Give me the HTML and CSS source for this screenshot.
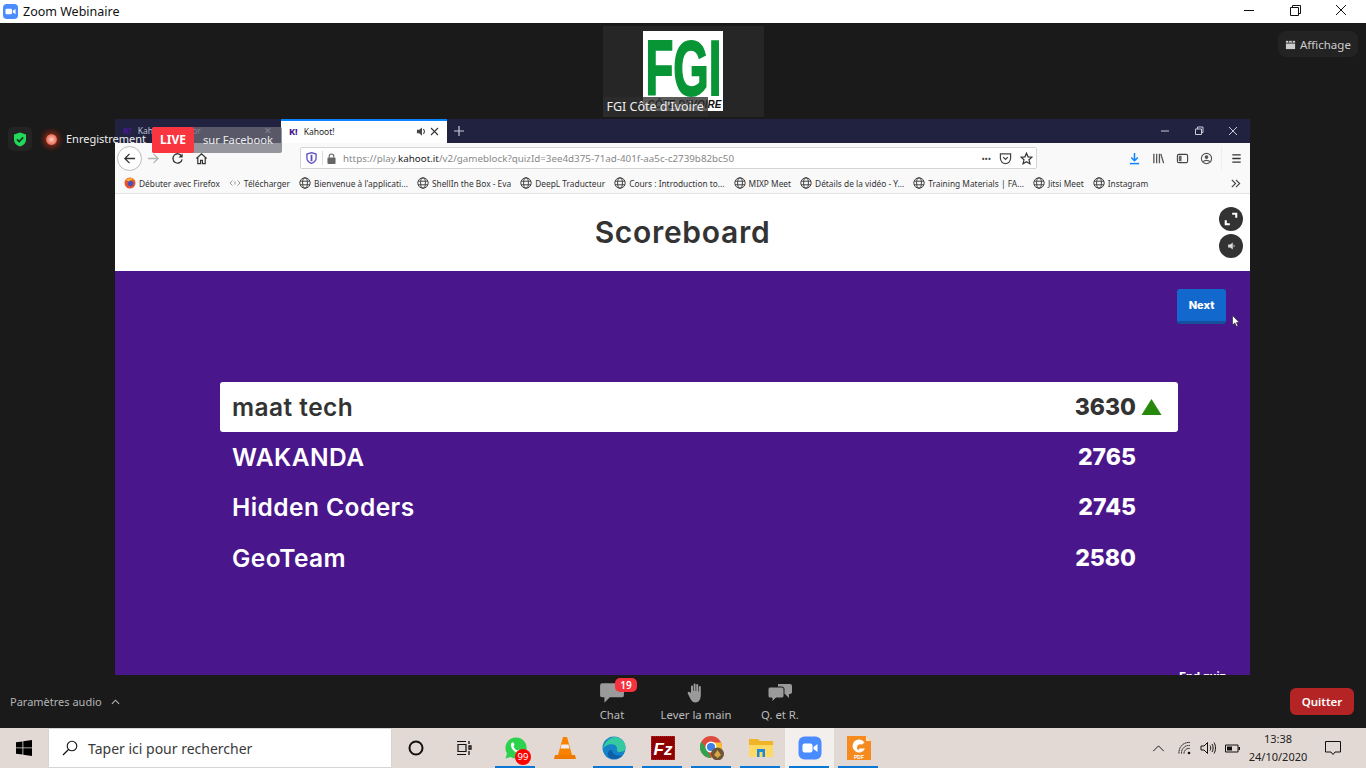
FILE: index.html
```html
<!DOCTYPE html>
<html lang="fr">
<head>
<meta charset="utf-8">
<title>Zoom Webinaire</title>
<link rel="stylesheet" href="styles.css">
</head>
<body>
<div class="app">
  <header class="titlebar">
    <svg class="zoom-logo" viewBox="0 0 16 16"><rect width="16" height="16" rx="4" fill="#4a8cff"/><rect x="2.6" y="5" width="7" height="6" rx="1.4" fill="#fff"/><path d="M10.4 7.2 13.4 5.2V10.8L10.4 8.8Z" fill="#fff"/></svg>
    <span class="title-text">Zoom Webinaire</span>
    <div class="win-controls">
      <svg viewBox="0 0 46 23"><path d="M18 10.5H28" stroke="#111" fill="none"/></svg>
      <svg viewBox="0 0 46 23"><path d="M18.5 7.5H26.5V15.5H18.5ZM20.5 7.5V5.5H28.5V13.5H26.5" stroke="#111" fill="none"/></svg>
      <svg viewBox="0 0 46 23"><path d="M18 5 28 15M28 5 18 15" stroke="#111" fill="none"/></svg>
    </div>
  </header>

  <main class="meeting">
    <section class="top-strip">
      <div class="thumb">
        <div class="fgi">
          <svg class="fgi-mark" viewBox="0 0 80 80"><text class="fgi-letters" x="2.5" y="63.5" textLength="76" lengthAdjust="spacingAndGlyphs">FGI</text><text class="fgi-sub" x="78.5" y="77" text-anchor="end">CÔTE D'IVOIRE</text></svg>
        </div>
        <span class="thumb-label">FGI Côte d'Ivoire</span>
      </div>
      <div class="view-btn">
        <svg viewBox="0 0 12 12"><path d="M1 2H11V11H1Z" fill="#ccc"/><path d="M1 4.5H11" stroke="#2a2a2a"/><path d="M4 1V4M8 1V4" stroke="#2a2a2a"/></svg>
        <span>Affichage</span>
      </div>
    </section>

    <div class="status">
      <span class="shield"><svg viewBox="0 0 14 15"><path d="M7 .5 13 2.6V7.5C13 11 10.4 13.4 7 14.6 3.6 13.4 1 11 1 7.5V2.6Z" fill="#23d959"/><path d="M3.9 7.4 6.2 9.6 10.2 5.4" stroke="#0d3b1c" stroke-width="1.7" fill="none"/></svg></span>
      <span class="rec-dot"></span>
      <span class="rec-text">Enregistrement</span>
    </div>

    <div class="live">
      <span class="live-tag">LIVE</span>
      <span class="live-text">sur Facebook</span>
    </div>

    <section class="browser">
      <div class="tabs">
        <div class="tab tab-off">
          <span class="kbadge">K!</span><span class="tab-name">Kahoot! Creator</span><span class="tab-x">✕</span>
        </div>
        <div class="tab tab-on">
          <span class="kbadge">K!</span><span class="tab-name">Kahoot!</span>
          <svg class="tab-sound" viewBox="0 0 12 12"><path d="M1 4H3.5L6.5 1.5V10.5L3.5 8H1Z" fill="#444"/><path d="M8 3.5C9.6 5 9.6 7 8 8.5" stroke="#444" stroke-width="1.2" fill="none"/></svg>
          <svg class="tab-close" viewBox="0 0 9 9"><path d="M1 1 8 8M8 1 1 8" stroke="#333" stroke-width="1.1"/></svg>
        </div>
        <svg class="tab-plus" viewBox="0 0 12 12"><path d="M6 1V11M1 6H11" stroke="#c8c9d4" stroke-width="1.2"/></svg>
        <div class="ff-controls">
          <svg viewBox="0 0 34 24"><path d="M13 12H21" stroke="#c8c9d4"/></svg>
          <svg viewBox="0 0 34 24"><path d="M13.5 10H19.5V15.5H13.5ZM15.5 10V8H21V13.5H19.5" stroke="#c8c9d4" fill="none"/></svg>
          <svg viewBox="0 0 34 24"><path d="M13 8 21 16M21 8 13 16" stroke="#c8c9d4"/></svg>
        </div>
      </div>

      <div class="toolbar">
        <span class="back"><svg viewBox="0 0 14 14"><path d="M13 7H2M7 2 2 7 7 12" stroke="#333" stroke-width="1.4" fill="none"/></svg></span>
        <svg class="tool-ico" viewBox="0 0 14 14"><path d="M1 7H12M7 2 12 7 7 12" stroke="#b4b4b4" stroke-width="1.4" fill="none"/></svg>
        <svg class="tool-ico" viewBox="0 0 14 14"><path d="M11.5 4.5A5 5 0 1 0 12 8" stroke="#333" stroke-width="1.4" fill="none"/><path d="M12.5 1.5V6H8Z" fill="#333"/></svg>
        <svg class="tool-ico" viewBox="0 0 14 14"><path d="M1.5 7 7 2 12.5 7M3 6V12.5H6V9H8V12.5H11V6" stroke="#333" stroke-width="1.3" fill="none"/></svg>
        <div class="urlbar">
          <svg class="url-shield" viewBox="0 0 12 13"><path d="M6 .7 11 2.2V6.5C11 9.5 9 11.3 6 12.4 3 11.3 1 9.5 1 6.5V2.2Z" fill="none" stroke="#5b4fc0" stroke-width="1.4"/><path d="M6 3V10" stroke="#5b4fc0" stroke-width="2"/></svg>
          <span class="url-sep"></span>
          <svg class="url-lock" viewBox="0 0 10 12"><rect x="0.5" y="5" width="9" height="7" rx="1" fill="#666"/><path d="M2.5 5V3.5A2.5 2.5 0 0 1 7.5 3.5V5" stroke="#666" stroke-width="1.3" fill="none"/></svg>
          <span class="url">https://play.<b>kahoot.it</b>/v2/gameblock?quizId=3ee4d375-71ad-401f-aa5c-c2739b82bc50</span>
          <span class="dots">•••</span>
          <svg class="url-ico" viewBox="0 0 14 14"><path d="M1.5 2H12.5V6.5C12.5 10 10 12.5 7 12.5S1.5 10 1.5 6.5Z" fill="none" stroke="#444" stroke-width="1.3"/><path d="M4.5 5.5 7 8 9.5 5.5" stroke="#444" stroke-width="1.4" fill="none"/></svg>
          <svg class="url-ico" viewBox="0 0 14 14"><path d="M7 1.3 8.7 5.2 12.9 5.6 9.7 8.4 10.7 12.6 7 10.4 3.3 12.6 4.3 8.4 1.1 5.6 5.3 5.2Z" fill="none" stroke="#333" stroke-width="1.3"/></svg>
        </div>
        <div class="tool-right">
          <svg viewBox="0 0 14 14"><path d="M7 1V9.5M3.5 6 7 9.5 10.5 6" stroke="#0a84ff" stroke-width="1.6" fill="none"/><path d="M2 12.5H12" stroke="#0a84ff" stroke-width="1.6"/></svg>
          <svg viewBox="0 0 14 14"><path d="M2 2V12M5 2V12M8 2V12M9.5 2 12.5 12" stroke="#555" stroke-width="1.4" fill="none"/></svg>
          <svg viewBox="0 0 14 14"><rect x="1.5" y="2.5" width="11" height="9" rx="1.5" fill="none" stroke="#444" stroke-width="1.2"/><path d="M3 4H6V10H3Z" fill="#666"/></svg>
          <svg viewBox="0 0 14 14"><circle cx="7" cy="7" r="5.5" fill="none" stroke="#555" stroke-width="1.2"/><circle cx="7" cy="5.5" r="2" fill="#555"/><path d="M3.5 10.5C4.5 8.5 9.5 8.5 10.5 10.5" stroke="#555" stroke-width="1.5" fill="none"/></svg>
          <span class="tool-sep"></span>
          <svg viewBox="0 0 14 14"><path d="M2.5 3H11.5M2.5 7H11.5M2.5 11H11.5" stroke="#333" stroke-width="1.4"/></svg>
        </div>
      </div>

      <div class="bookmarks">
        <span class="bm"><svg viewBox="0 0 12 12"><circle cx="6" cy="6" r="5.5" fill="#e8552c"/><circle cx="6.5" cy="6.5" r="2.8" fill="#4a4fb5"/><path d="M2 3C4 1 8 .5 10.5 3 8 2.5 6 3 5 4.5Z" fill="#ffb62e"/></svg>Débuter avec Firefox</span>
        <span class="bm"><svg viewBox="0 0 12 12"><path d="M3.5 3.5 1 6 3.5 8.5M8.5 3.5 11 6 8.5 8.5" stroke="#999" fill="none"/><path d="M6 4.5V7.5" stroke="#999"/></svg>Télécharger</span>
        <span class="bm"><svg viewBox="0 0 12 12"><use href="#globe"/></svg>Bienvenue à l'applicati...</span>
        <span class="bm"><svg viewBox="0 0 12 12"><use href="#globe"/></svg>ShellIn the Box - Eva</span>
        <span class="bm"><svg viewBox="0 0 12 12"><use href="#globe"/></svg>DeepL Traducteur</span>
        <span class="bm"><svg viewBox="0 0 12 12"><use href="#globe"/></svg>Cours : Introduction to...</span>
        <span class="bm"><svg viewBox="0 0 12 12"><use href="#globe"/></svg>MIXP Meet</span>
        <span class="bm"><svg viewBox="0 0 12 12"><use href="#globe"/></svg>Détails de la vidéo - Y...</span>
        <span class="bm"><svg viewBox="0 0 12 12"><use href="#globe"/></svg>Training Materials | FA...</span>
        <span class="bm"><svg viewBox="0 0 12 12"><use href="#globe"/></svg>Jitsi Meet</span>
        <span class="bm"><svg viewBox="0 0 12 12"><use href="#globe"/></svg>Instagram</span>
        <svg class="bm-more" viewBox="0 0 12 12"><path d="M2 2 6 6 2 10M6.5 2 10.5 6 6.5 10" stroke="#444" stroke-width="1.3" fill="none"/></svg>
      </div>

      <div class="kahoot-head">
        <h1>Scoreboard</h1>
        <div class="round-btns">
          <span class="round"><svg viewBox="0 0 12 12"><path d="M7 1.5H10.5V5M5 10.5H1.5V7" stroke="#fff" stroke-width="1.8" fill="none"/></svg></span>
          <span class="round"><svg viewBox="0 0 12 12"><path d="M3.500 4.800H5.300L7.500 3V9L5.300 7.200H3.500Z" fill="#ddd"/><path d="M8.300 5C8.800 5.600 8.800 6.400 8.300 7" stroke="#ddd" stroke-width=".8" fill="none"/></svg></span>
        </div>
      </div>

      <div class="kahoot-body">
        <div class="next-row"><button class="next">Next</button>
          <svg class="cursor" viewBox="0 0 8 12"><path d="M.5.5V10L2.8 8 4.5 11.5 6 10.8 4.3 7.5H7.3Z" fill="#fff" stroke="#222" stroke-width=".6"/></svg>
        </div>
        <ol class="scores">
          <li class="score top"><span>maat tech</span><b>3630</b><svg class="arrow" viewBox="0 0 20 16"><path d="M10 0 20 16H0Z" fill="#26890c"/></svg></li>
          <li class="score"><span>WAKANDA</span><b>2765</b></li>
          <li class="score"><span>Hidden Coders</span><b>2745</b></li>
          <li class="score"><span>GeoTeam</span><b>2580</b></li>
        </ol>
        <div class="endquiz">End quiz</div>
      </div>
    </section>

    <footer class="controls">
      <div class="audio"><span>Paramètres audio</span><svg viewBox="0 0 10 6"><path d="M1 5 5 1 9 5" stroke="#bbb" stroke-width="1.2" fill="none"/></svg></div>
      <div class="actions">
        <div class="action chat">
          <svg viewBox="0 0 24 20"><path d="M3 1H21A2 2 0 0 1 23 3V12A2 2 0 0 1 21 14H10L5 19V14H3A2 2 0 0 1 1 12V3A2 2 0 0 1 3 1Z" fill="#9a9a9a"/></svg>
          <span class="badge">19</span>
          <span>Chat</span>
        </div>
        <div class="action">
          <svg viewBox="0 0 20 22"><path d="M5 11V4.5C5 3 7 3 7 4.5V9H7.6V2.5C7.6 1 9.6 1 9.6 2.5V9H10.2V3C10.2 1.5 12.2 1.5 12.2 3V9.5H12.8V5C12.8 3.500 14.8 3.500 14.8 5V13C14.8 17 13 20.5 9.5 20.5 7 20.5 5.5 19 4 16L1.8 11.5C1.2 10 3 9 4 10.3Z" fill="#9a9a9a"/></svg>
          <span>Lever la main</span>
        </div>
        <div class="action">
          <svg viewBox="0 0 26 20"><path d="M11 1H23A2 2 0 0 1 25 3V9A2 2 0 0 1 23 11H22V15L18 11H11Z" fill="#9a9a9a"/><path d="M3 4H15A2 2 0 0 1 17 6V13A2 2 0 0 1 15 15H9L5 19V15H3A2 2 0 0 1 1 13V6A2 2 0 0 1 3 4Z" fill="#9a9a9a" stroke="#1a1a1a"/></svg>
          <span>Q. et R.</span>
        </div>
      </div>
      <button class="quit">Quitter</button>
    </footer>
  </main>

  <nav class="taskbar">
    <span class="start"><svg viewBox="0 0 16 16"><path d="M0 2.3 6.5 1.4V7.5H0ZM7.3 1.3 16 0V7.5H7.3ZM0 8.3H6.5V14.6L0 13.7ZM7.3 8.3H16V16L7.3 14.7Z" fill="#000"/></svg></span>
    <div class="search">
      <svg viewBox="0 0 16 16"><circle cx="10" cy="6" r="4.8" fill="none" stroke="#111" stroke-width="1.1"/><path d="M6.5 9.5 1 15" stroke="#111" stroke-width="1.3"/></svg>
      <span>Taper ici pour rechercher</span>
    </div>
    <span class="sys"><svg viewBox="0 0 16 16"><circle cx="8" cy="8" r="6.5" fill="none" stroke="#111" stroke-width="2"/></svg></span>
    <span class="sys"><svg viewBox="0 0 16 16"><path d="M1 1.5H10M1 14.5H10M2 4.5H10V11.5H2Z" fill="none" stroke="#111" stroke-width="1.2"/><path d="M13 1V4M13 6H15V9H13ZM13 11V15" stroke="#111" stroke-width="1.3" fill="none"/></svg></span>
    <div class="apps">
      <span class="app-ico running"><svg viewBox="0 0 24 24"><path d="M12 1.5A10.5 10.5 0 0 0 3 17.5L1.5 22.5 6.7 21A10.5 10.5 0 1 0 12 1.5Z" fill="#2bd24c"/><path d="M8 6.5C6 8 7 12 9.5 14.5S15.5 18 17 16L15 13.5 13.5 14.5C12 14 10 12 9.5 10.5L10.5 9 9.5 6.5Z" fill="#fff"/></svg><em class="wa-badge">99</em></span>
      <span class="app-ico"><svg viewBox="0 0 24 24"><path d="M10 1H14L19 19H5Z" fill="#f78200"/><path d="M8.5 8.5H15.5L16.5 12.5H7.5Z" fill="#eee"/><path d="M2 19H22L23 23H1Z" fill="#f07a00"/></svg></span>
      <span class="app-ico running"><svg viewBox="0 0 24 24"><circle cx="12" cy="12" r="11.5" fill="#1583c9"/><path d="M1 13C2 6 8 1 13 1 19 1 23.5 6 23.5 12 23.5 15 20 16 17 16 13 16 17 12 13 9 9 7 3 9 1 13Z" fill="#35c9a0"/><path d="M10 14C10 18 14 20 20 19.5 17 23 12 24 8 22 4 19 6 13 10 14Z" fill="#0f5fa8"/></svg></span>
      <span class="app-ico running"><svg viewBox="0 0 24 24"><rect width="24" height="24" fill="#8e0000" stroke="#c55" stroke-dasharray="1 1"/><text class="fz" x="12" y="19">Fz</text></svg></span>
      <span class="app-ico running"><svg viewBox="0 0 24 24"><circle cx="11" cy="11" r="11" fill="#dd4b3e"/><path d="M11 22A11 11 0 0 1 1.5 5.5L7 14Z" fill="#2ea44f"/><path d="M11 22A11 11 0 0 0 21 6.5H11L15 14Z" fill="#fbc02d"/><circle cx="11" cy="11" r="4.8" fill="#3f7fe8" stroke="#fff" stroke-width="1.5"/><circle cx="17.5" cy="18" r="6.5" fill="#6d5537"/><path d="M14 19 17.5 14 21 19 17.5 22Z" fill="#d9a441"/></svg></span>
      <span class="app-ico running"><svg viewBox="0 0 24 24"><path d="M0 3H9L11 5H24V21H0Z" fill="#f0b429"/><path d="M0 9H24V21H0Z" fill="#ffd966"/><path d="M8 13H16V21H13.5V16H10.5V21H8Z" fill="#1c8ad6"/></svg></span>
      <span class="app-ico running active"><svg viewBox="0 0 24 24"><rect width="23" height="23" x=".5" y=".5" rx="6" fill="#4a8cff"/><rect x="4.5" y="7.5" width="10" height="9" rx="2" fill="#fff"/><path d="M15.5 11 19.5 8V16L15.5 13Z" fill="#fff"/></svg></span>
      <span class="app-ico running"><svg viewBox="0 0 24 24"><path d="M0 0H19L24 5V24H0Z" fill="#f58a1f"/><path d="M19 0 24 5H19Z" fill="#fde1c4"/><path d="M17.5 6.5A6.5 6.5 0 1 0 18 12.5H12.5L11 15H14.5A3.5 3.5 0 1 1 15 8.5Z" fill="#fff"/><text class="pdf" x="12" y="22.5">PDF</text></svg></span>
    </div>
    <div class="tray">
      <svg class="chev" viewBox="0 0 14 8"><path d="M1 7 7 1 13 7" stroke="#111" stroke-width="1.1" fill="none"/></svg>
      <svg class="net" viewBox="0 0 14 14"><path d="M1 12.5A10 10 0 0 1 12 1.5M3.5 12.5A7.5 7.5 0 0 1 12 4.5M6 12.5A5 5 0 0 1 12 7.5" stroke="#111" fill="none" stroke-dasharray="1.5 .5"/><circle cx="11" cy="12" r="1.3" fill="#111"/></svg>
      <svg class="vol" viewBox="0 0 16 14"><path d="M1 5H4L7.5 1.5V12.5L4 9H1Z" fill="none" stroke="#111"/><path d="M10 4.5C11 6 11 8 10 9.5M12 3C13.5 5 13.5 9 12 11M14 1.5C16 4.5 16 9.5 14 12.5" stroke="#111" fill="none"/></svg>
      <svg class="bat" viewBox="0 0 15 9"><path d="M.5 1H13V8H.5Z" fill="none" stroke="#111"/><path d="M2 2.5H7V6.5H2Z" fill="#111"/><path d="M13.5 3H15V6H13.5Z" fill="#111"/></svg>
      <div class="clock"><span>13:38</span><span>24/10/2020</span></div>
      <svg class="notif" viewBox="0 0 16 16"><path d="M.5 1.5H15.5V12H10L8 14.5 6 12H.5Z" fill="none" stroke="#111"/></svg>
    </div>
  </nav>
</div>
<svg class="defs" aria-hidden="true"><defs><g id="globe" fill="none" stroke="#444"><circle cx="6" cy="6" r="5.2"/><ellipse cx="6" cy="6" rx="2.4" ry="5.2"/><path d="M1 4.2H11M1 7.8H11"/></g></defs></svg>
</body>
</html>
```

FILE: styles.css
```css
* { box-sizing: border-box; }
html, body { margin: 0; padding: 0; }
body { width: 1366px; height: 768px; overflow: hidden; font-family: "Noto Sans", "Open Sans", sans-serif; }
.defs { display: block; width: 0; height: 0; }
.app { width: 1366px; height: 768px; display: flex; flex-direction: column; }

.titlebar { height: 23px; background: #fff; display: flex; align-items: center; padding-left: 3px; flex: none; }
.zoom-logo { width: 15px; height: 15px; }
.title-text { margin-left: 5px; font-size: 12.5px; color: #111; }
.win-controls { margin-left: auto; margin-right: 2px; display: flex; }
.win-controls svg { width: 46px; height: 23px; display: block; }

.meeting { position: relative; flex: 1; background: #1a1a1a; display: flex; flex-direction: column; min-height: 0; }
.top-strip { height: 96px; flex: none; display: flex; justify-content: center; position: relative; padding-top: 3px; }
.thumb { position: relative; width: 161px; height: 91px; background: #262626; display: flex; justify-content: center; padding-top: 5px; }
.fgi { width: 80px; height: 80px; background: #fff; }
.fgi-mark { width: 80px; height: 80px; display: block; }
.fgi-letters { font-family: "Liberation Sans", sans-serif; font-weight: 700; font-size: 78px; fill: #079536; stroke: #079536; stroke-width: 2px; }
.fgi-sub { font-family: "Liberation Sans", sans-serif; font-weight: 700; font-style: italic; font-size: 10px; fill: #111; }
.thumb-label { position: absolute; left: 0; bottom: 0; padding: 0 4px; height: 20px; line-height: 20px; background: rgba(45,45,45,.78); color: #eee; font-size: 12.5px; white-space: nowrap; }
.view-btn { position: absolute; right: 8px; top: 8px; width: 80px; height: 26px; border-radius: 8px; background: #232323; display: flex; align-items: center; gap: 4px; padding-left: 7px; color: #ccc; font-size: 11.5px; }
.view-btn svg { width: 11px; height: 11px; }

.status { position: absolute; left: 8px; top: 104px; height: 24px; display: flex; align-items: center; color: #eee; font-size: 11px; z-index: 2; }
.shield { width: 24px; height: 24px; border-radius: 5px; background: #232323; display: flex; align-items: center; justify-content: center; }
.shield svg { width: 14px; height: 15px; }
.rec-dot { width: 11px; height: 11px; border-radius: 50%; margin-left: 14px; background: radial-gradient(circle, #ffd0c4 0, #e8604a 75%); box-shadow: 0 0 5px 3px #7e2616; }
.rec-text { margin: 0 0 2px 9px; white-space: nowrap; }
.live { position: absolute; left: 152px; top: 104px; width: 130px; height: 26px; display: flex; align-items: center; background: rgba(110,110,120,.72); color: #eee; font-size: 11.2px; z-index: 3; border-radius: 2px; }
.live-tag { width: 42px; height: 26px; line-height: 26px; text-align: center; background: #f9353f; color: #fff; font-weight: 700; font-size: 12px; border-radius: 2px; }
.live-text { margin: 0 0 2px 9px; white-space: nowrap; }

.browser { margin-left: 115px; width: 1135px; height: 556px; flex: none; display: flex; flex-direction: column; background: #fff; overflow: hidden; font-family: "Noto Sans", sans-serif; }
.tabs { height: 24px; flex: none; background: #20223f; display: flex; align-items: stretch; }
.tab { width: 166px; display: flex; align-items: center; font-size: 8.5px; padding: 0 0 1px 8px; }
.tab-off { color: #bfc0cc; }
.tab-on { width: 166px; background: #fff; color: #222; border-top: 2px solid #0a84ff; }
.kbadge { color: #46178f; font-weight: 800; font-size: 9px; margin-right: 6px; }
.tab-name { flex: 1; white-space: nowrap; }
.tab-x { margin-right: 9px; font-size: 9px; }
.tab-sound { width: 11px; height: 11px; margin-right: 3px; }
.tab-close { width: 9px; height: 9px; margin-right: 8px; }
.tab-plus { width: 12px; height: 12px; align-self: center; margin-left: 6px; }
.ff-controls { margin-left: auto; display: flex; }
.ff-controls svg { width: 34px; height: 24px; display: block; }

.toolbar { height: 30px; flex: none; background: #f9f9fa; display: flex; align-items: center; padding-left: 2px; }
.back { width: 25px; height: 25px; border: 1px solid #bbb; background: #fff; border-radius: 50%; display: flex; align-items: center; justify-content: center; }
.back svg { width: 13px; height: 13px; }
.tool-ico { width: 13px; height: 13px; margin-left: 11px; }
.tool-ico:nth-of-type(1) { margin-left: 5px; }
.urlbar { width: 737px; height: 22px; background: #fff; border: 1px solid #d4d4d6; border-radius: 2px; display: flex; align-items: center; padding-left: 5px; margin-left: 92px; }
.url-shield { width: 11px; height: 12px; }
.url-sep { width: 1px; height: 14px; background: #ddd; margin-left: 5px; }
.url-lock { width: 9px; height: 11px; margin-left: 4px; }
.url { margin: 1px 0 0 7px; font-size: 9.8px; color: #888; white-space: nowrap; flex: 1; }
.url b { font-weight: 400; color: #222; }
.dots { font-size: 9px; color: #444; letter-spacing: -.2px; }
.url-ico { width: 13px; height: 13px; margin-left: 8px; }
.url-ico:last-child { margin-right: 3px; }
.tool-right { display: flex; align-items: center; margin-left: 91px; gap: 11px; }
.tool-right svg { width: 13px; height: 13px; flex: none; }
.tool-sep { width: 1px; height: 24px; background: #eee; margin: 0 -3px; }

.bookmarks { height: 21px; flex: none; background: #f9f9fa; border-bottom: 1px solid #e4e4e6; display: flex; align-items: center; padding-left: 9px; gap: 9px; font-size: 8.35px; color: #333; }
.bm { display: flex; align-items: center; gap: 3px; white-space: nowrap; }
.bm svg { width: 12px; height: 12px; flex: none; }
.bm-more { width: 11px; height: 11px; margin-left: auto; margin-right: 9px; }

.kahoot-head { height: 77px; flex: none; position: relative; display: flex; align-items: center; justify-content: center; background: #fff; }
.kahoot-head h1 { margin: 0 0 2px; font-family: Inter, sans-serif; font-weight: 600; font-size: 30px; letter-spacing: .7px; color: #333; }
.round-btns { position: absolute; right: 7px; top: 13px; display: flex; flex-direction: column; gap: 3px; }
.round { width: 24px; height: 24px; border-radius: 50%; background: #333; display: flex; align-items: center; justify-content: center; }
.round svg { width: 14px; height: 14px; }

.kahoot-body { flex: 1; min-height: 0; background: #4a168c; display: flex; flex-direction: column; overflow: hidden; font-family: Inter, sans-serif; }
.next-row { flex: none; display: flex; justify-content: flex-end; align-items: flex-start; padding: 18px 24px 0 0; height: 111px; position: relative; }
.next { width: 49px; height: 35px; border: 0; border-bottom: 3px solid #164f9c; border-radius: 3px; background: #1368ce; color: #fff; font-family: Inter, sans-serif; font-weight: 800; font-size: 11px; padding: 0; }
.cursor { position: absolute; left: 1117px; top: 44px; width: 8px; height: 12px; }
.scores { list-style: none; margin: 0 0 0 105px; padding: 0; width: 958px; flex: none; }
.score { height: 50.2px; display: flex; align-items: center; padding: 0 42px 0 12px; color: #fff; font-size: 24.5px; letter-spacing: .45px; font-weight: 600; }
.score span { flex: 1; }
.score b { font-weight: 800; font-size: 23px; letter-spacing: 0; }
.score.top { background: #fff; color: #333; border-radius: 3px; position: relative; }
.arrow { position: absolute; right: 16px; top: 17px; width: 21px; height: 16px; }
.endquiz { flex: none; margin: 83px 24px 0 0; text-align: right; color: #fff; font-weight: 800; font-size: 11px; line-height: 20px; }

.controls { flex: 1; position: relative; display: flex; align-items: center; min-height: 0; color: #bbb; font-size: 11.3px; }
.audio { position: absolute; left: 10px; top: 19px; display: flex; align-items: center; gap: 9px; color: #b4b4b4; font-size: 11px; }
.audio svg { width: 9px; height: 6px; }
.actions { position: absolute; left: 0; top: 0; width: 100%; height: 100%; display: flex; justify-content: center; padding-left: 26px; }
.action { position: relative; display: flex; flex-direction: column; align-items: center; width: 84px; padding-top: 7px; white-space: nowrap; }
.action svg { height: 22px; width: 26px; margin-bottom: 3px; }
.action span:last-child { line-height: 16px; }
.badge { position: absolute; left: 45px; top: 3px; height: 14px; width: 22px; border-radius: 5px; background: #f6323e; color: #fff; font-size: 10px; font-weight: 600; text-align: center; line-height: 14px; }
.quit { position: absolute; left: 1290px; top: 13px; width: 64px; height: 27px; border: 0; border-radius: 6px; background: #b52424; color: #fff; font-family: "Noto Sans", sans-serif; font-weight: 600; font-size: 11.5px; padding: 0; }

.taskbar { height: 40px; flex: none; background: #e3d9d4; display: flex; align-items: center; }
.start { width: 48px; display: flex; justify-content: center; flex: none; }
.start svg { width: 16px; height: 16px; }
.search { width: 344px; height: 40px; background: #fff; border: 1px solid #d8d4d2; display: flex; align-items: center; padding-left: 13px; flex: none; font-size: 14px; color: #3a3a3a; gap: 10px; }
.search svg { width: 16px; height: 16px; }
.sys { width: 48px; flex: none; display: flex; justify-content: center; }
.sys svg { width: 16px; height: 16px; }
.apps { display: flex; margin-left: 3px; height: 40px; }
.app-ico { position: relative; width: 49px; height: 40px; display: flex; align-items: center; justify-content: center; flex: none; }
.app-ico svg { width: 24px; height: 24px; }
.app-ico.running::after { content: ""; position: absolute; left: 4px; right: 5px; bottom: 0; height: 2px; background: #0a78d4; }
.app-ico.active { background: #f3efec; }
.wa-badge { position: absolute; left: 24px; top: 21px; width: 16px; height: 16px; border-radius: 50%; background: #f00; color: #fff; font-style: normal; font-size: 9.5px; text-align: center; line-height: 16px; }
.fz { font-family: "Liberation Sans", sans-serif; font-weight: 700; font-style: italic; font-size: 17px; fill: #fff; text-anchor: middle; }
.pdf { font-family: "Liberation Sans", sans-serif; font-weight: 700; font-size: 5px; fill: #fff; text-anchor: middle; }
.tray { margin-left: auto; display: flex; align-items: center; height: 40px; color: #222; }
.chev { width: 13px; height: 7px; }
.net { width: 14px; height: 14px; margin-left: 13px; }
.vol { width: 16px; height: 14px; margin-left: 8px; }
.bat { width: 15px; height: 9px; margin-left: 9px; }
.clock { width: 60px; margin-left: 8px; display: flex; flex-direction: column; align-items: center; font-size: 11px; line-height: 18px; white-space: nowrap; }
.notif { width: 16px; height: 16px; margin-left: 17px; margin-right: 25px; }
```
